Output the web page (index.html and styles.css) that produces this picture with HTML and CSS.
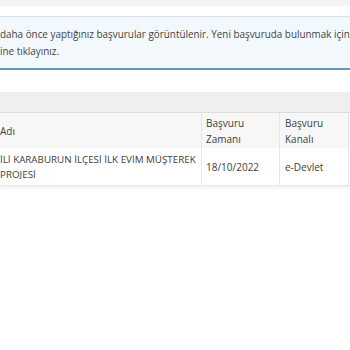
FILE: index.html
```html
<!DOCTYPE html>
<html lang="tr">
<head>
<meta charset="utf-8">
<link rel="stylesheet" href="styles.css">
</head>
<body>
<div class="page">
  <div class="topband"></div>
  <div class="info">
    <p class="line">daha önce yaptığınız başvurular görüntülenir. Yeni başvuruda bulunmak için</p>
    <p class="line">ine tıklayınız.</p>
  </div>
  <div class="panel">
    <div class="panel-head"></div>
    <table class="grid">
      <thead>
        <tr>
          <th class="c-name">Adı</th>
          <th class="c-date">Başvuru<br>Zamanı</th>
          <th class="c-chan">Başvuru<br>Kanalı</th>
          <th class="c-rest"></th>
        </tr>
      </thead>
      <tbody>
        <tr>
          <td class="c-name">İLİ KARABURUN İLÇESİ İLK EVİM MÜŞTEREK<br>PROJESİ</td>
          <td class="c-date">18/10/2022</td>
          <td class="c-chan">e-Devlet</td>
          <td class="c-rest"></td>
        </tr>
      </tbody>
    </table>
  </div>
</div>
</body>
</html>
```
FILE: styles.css
```css
html, body { margin: 0; padding: 0; background: #fff; }
body { font-family: "Open Sans", "Noto Sans", sans-serif; color: #444; }
.page { width: 350px; height: 350px; overflow: hidden; }
.topband { height: 6px; background: #f4f4f4; }
.info {
  margin-top: 10px;
  height: 42px;
  background: #f3f8fc;
  border-top: 1px solid #d6e3ee;
  border-bottom: 2px solid #6d95ba;
  padding-top: 9px;
  box-sizing: content-box;
}
.line { margin: 0; font-size: 9.9px; line-height: 17px; white-space: nowrap; color: #444; }
.panel { margin-top: 22px; width: 350px; box-shadow: 0 2px 3px rgba(0,0,0,0.06); }
.panel-head { height: 20px; background: #efefef; border-bottom: 1px solid #dcdcdc; }
.grid { border-collapse: collapse; width: 350px; table-layout: fixed; font-size: 10px; }
.grid th, .grid td { text-align: left; vertical-align: middle; font-weight: normal; padding: 0 0 0 4px; white-space: nowrap; }
.grid th { background: #f7f7f7; height: 35px; line-height: 16px; color: #404040; }
.grid td { height: 35px; line-height: 15px; border-bottom: 1px solid #e8e8e8; color: #404040; padding-top: 2px; }
.grid td.c-name { font-size: 9.8px; padding-top: 0; }
.grid .c-name { width: 201px; padding-left: 0; }
.grid .c-date { width: 73px; border-left: 1px solid #e6e6e6; }
.grid .c-chan { width: 63px; border-left: 1px solid #e6e6e6; padding-left: 5px; }
.grid .c-rest { border-left: 1px solid #e6e6e6; }
```
